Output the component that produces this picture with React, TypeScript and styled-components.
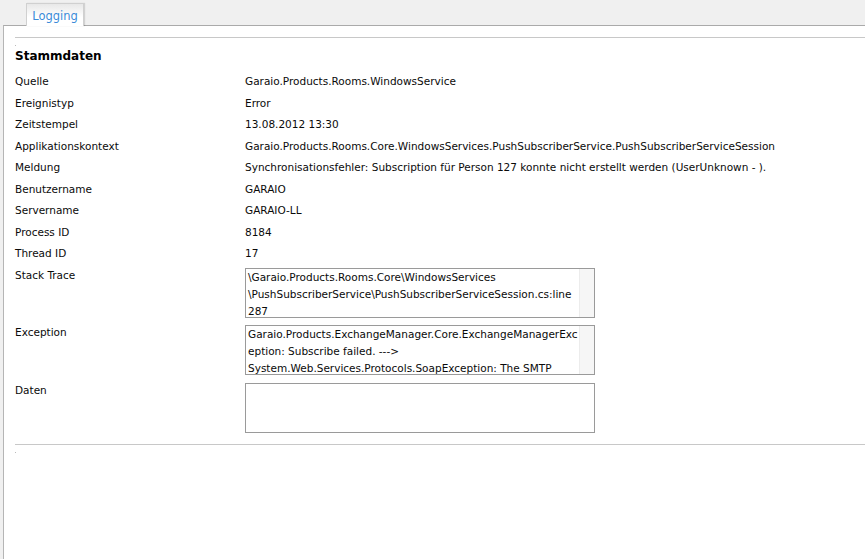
import React from "react";
import styled, { createGlobalStyle } from "styled-components";

const Global = createGlobalStyle`
  html, body { margin: 0; padding: 0; background: #f0f0f0; }
  body { font-family: "DejaVu Sans", Verdana, sans-serif; font-size: 10.5px; color: #0a0a0a; }
`;

const Page = styled.div`
  width: 865px;
  height: 559px;
  display: flex;
  flex-direction: column;
  background: #f0f0f0;
  overflow: hidden;
`;

const TabBar = styled.div`
  height: 25px;
  display: flex;
  align-items: flex-end;
  padding-left: 26px;
  box-sizing: border-box;
`;

const Tab = styled.div`
  width: 58px;
  height: 23px;
  box-sizing: border-box;
  border: 1px solid #d0d0d0;
  border-bottom: none;
  background: linear-gradient(#e8e8e8, #ffffff 60%);
  box-shadow: 1px 0 1px rgba(0,0,0,0.12);
  color: #3b8bd8;
  font-size: 11.5px;
  display: flex;
  align-items: center;
  justify-content: center;
  padding-top: 2px;
  margin-bottom: -1px;
  position: relative;
  z-index: 1;
`;

const Panel = styled.div`
  flex: 1;
  margin-left: 3px;
  background: #fff;
  border-left: 1px solid #b5b5b5;
  border-top: 1px solid #aaaaaa;
  padding: 11px 0 0 11px;
`;

const Rule = styled.div`
  height: 1px;
  background: #c8c8c8;
`;

const Dot = styled.div`
  width: 1px;
  height: 1px;
  background: #bbb;
  margin-top: 7px;
`;

const Title = styled.div`
  font-weight: bold;
  font-size: 12px;
  margin-top: 3px;
  margin-bottom: 11px;
  color: #000;
`;

const Grid = styled.div`
  display: grid;
  grid-template-columns: 230px 1fr;
`;

const Label = styled.div<{ $h: number }>`
  height: ${(p) => p.$h}px;
  line-height: 15px;
  white-space: nowrap;
`;

const Value = styled.div`
  height: 21.5px;
  line-height: 15px;
  white-space: nowrap;
`;

const BoxCell = styled.div<{ $h: number }>`
  height: ${(p) => p.$h}px;
`;

const Box = styled.div`
  width: 350px;
  height: 50px;
  box-sizing: border-box;
  border: 1px solid #9a9a9a;
  display: flex;
  overflow: hidden;
  background: #fff;
`;

const BoxText = styled.div`
  flex: 1;
  padding: 0 2px;
  line-height: 17px;
  white-space: nowrap;
  overflow: hidden;
`;

const Scroll = styled.div`
  width: 14px;
  background: #f6f6f6;
  border-left: 1px solid #ececec;
`;

const Bottom = styled.div`
  margin-top: 11px;
`;

const rows: [string, string][] = [
  ["Quelle", "Garaio.Products.Rooms.WindowsService"],
  ["Ereignistyp", "Error"],
  ["Zeitstempel", "13.08.2012 13:30"],
  ["Applikationskontext", "Garaio.Products.Rooms.Core.WindowsServices.PushSubscriberService.PushSubscriberServiceSession"],
  ["Meldung", "Synchronisationsfehler: Subscription für Person 127 konnte nicht erstellt werden (UserUnknown - )."],
  ["Benutzername", "GARAIO"],
  ["Servername", "GARAIO-LL"],
  ["Process ID", "8184"],
  ["Thread ID", "17"],
];

const boxes: [string, React.ReactNode, boolean, number][] = [
  [
    "Stack Trace",
    <>
      \Garaio.Products.Rooms.Core\WindowsServices
      <br />
      \PushSubscriberService\PushSubscriberServiceSession.cs:line
      <br />
      287
    </>,
    true,
    57.5,
  ],
  [
    "Exception",
    <>
      Garaio.Products.ExchangeManager.Core.ExchangeManagerExc
      <br />
      eption: Subscribe failed. ---&gt;
      <br />
      System.Web.Services.Protocols.SoapException: The SMTP
    </>,
    true,
    57.5,
  ],
  ["Daten", null, false, 50],
];

export default function App() {
  return (
    <Page>
      <Global />
      <TabBar>
        <Tab>Logging</Tab>
      </TabBar>
      <Panel>
        <Rule />
        <Dot />
        <Title>Stammdaten</Title>
        <Grid>
          {rows.map(([l, v]) => (
            <React.Fragment key={l}>
              <Label $h={21.5}>{l}</Label>
              <Value>{v}</Value>
            </React.Fragment>
          ))}
          {boxes.map(([l, c, s, h]) => (
            <React.Fragment key={l}>
              <Label $h={h}>{l}</Label>
              <BoxCell $h={h}>
                <Box>
                  <BoxText>{c}</BoxText>
                  {s && <Scroll />}
                </Box>
              </BoxCell>
            </React.Fragment>
          ))}
        </Grid>
        <Bottom>
          <Rule />
          <Dot />
        </Bottom>
      </Panel>
    </Page>
  );
}
